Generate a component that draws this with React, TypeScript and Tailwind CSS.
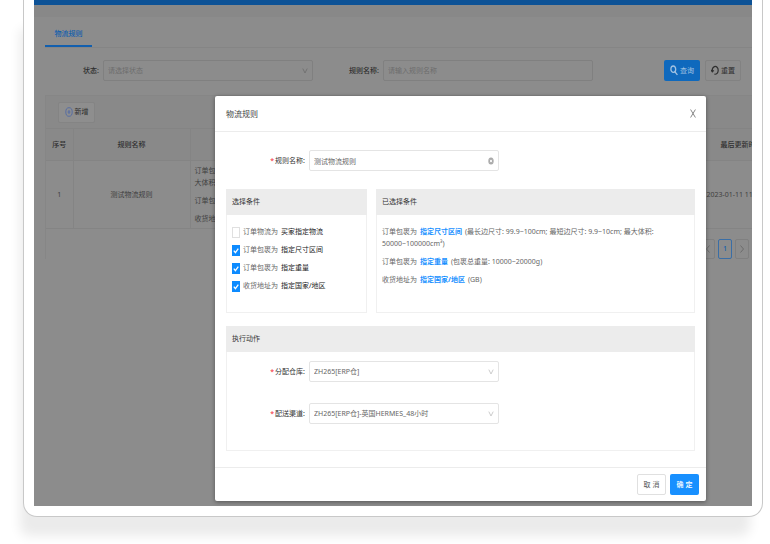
import type { ReactNode } from 'react';

const FONT = "font-['Noto_Sans','Noto_Sans_CJK_SC',sans-serif]";

function Chevron({ className }: { className: string }) {
  return (
    <svg viewBox="0 0 6 6" className={`pointer-events-none col-start-1 row-start-1 mr-[5px] h-[6px] w-[6px] self-center justify-self-end ${className}`} fill="none" stroke="currentColor">
      <path d="M0.8 0.6 L3 5 L5.2 0.6" />
    </svg>
  );
}

function CheckRow({ label, value, checked = false }: { label: string; value: string; checked?: boolean }) {
  return (
    <label className="flex h-[18px] items-center gap-[3px]">
      <span className="grid">
        <input
          type="checkbox"
          defaultChecked={checked}
          className="peer col-start-1 row-start-1 h-[11px] w-2 appearance-none border border-[#e0e0e0] bg-white checked:border-[#0d8bff] checked:bg-[#0d8bff]"
        />
        <svg viewBox="0 0 8 11" className="pointer-events-none invisible col-start-1 row-start-1 h-[11px] w-2 peer-checked:visible" fill="none" stroke="#fff" strokeWidth="1.3">
          <path d="M1.8 5.6 L3.4 7.6 L6.3 3.6" />
        </svg>
      </span>
      <span className="text-[#666]">{label}</span>
      <span className="text-[#222]">{value}</span>
    </label>
  );
}

function Panel({ title, className, children }: { title: string; className: string; children: ReactNode }) {
  return (
    <section className={`border border-[#f0f0f0] ${className}`}>
      <h3 className="-mx-px -mt-px flex h-[26px] items-center bg-[#ececec] px-[6px] text-[#333]">{title}</h3>
      {children}
    </section>
  );
}

function Condition({ label, value, details }: { label: string; value: string; details: string[] }) {
  return (
    <p className="flex flex-wrap">
      <span>{label}</span>
      <b className="mx-[3px] font-bold text-[#1890ff]">{value}</b>
      {details.map((detail) => (
        <span key={detail} className="mr-[2px]">{detail}</span>
      ))}
    </p>
  );
}

function FieldRow({ id, label, children }: { id: string; label: string; children: ReactNode }) {
  return (
    <div className="flex items-center">
      <label htmlFor={id} className="w-[78px] shrink-0 pr-1 text-right text-[#333]">
        <span className="mr-px text-[#f5222d]">*</span>{label}:
      </label>
      <div className="grid w-[190px]">{children}</div>
    </div>
  );
}

const control = 'col-start-1 row-start-1 h-[21px] w-full appearance-none rounded-[2px] border border-[#e4e4e4] bg-white px-1 text-[#666] outline-none';

function Backdrop() {
  return (
    <main className="col-start-1 row-start-1 min-w-0 overflow-hidden bg-[#8c8c8c] text-[#2f2f2f]">
      <div className="h-[5px] bg-[#0d5296]" />
      <div className="h-3 bg-[#888]" />
      <div className="pl-[11px]">
        <nav className="flex border-b border-[#858585]">
          <a href="#rules" className="flex h-[30px] w-[47px] items-center justify-center border-b-2 border-[#125fae] pt-[6px] font-medium text-[#125fae]">
            物流规则
          </a>
        </nav>

        <form className="flex items-center pt-3">
          <label htmlFor="status" className="w-[58px] pr-1 text-right font-medium">状态:</label>
          <div className="grid w-[210px]">
            <select id="status" className="col-start-1 row-start-1 h-[21px] appearance-none rounded-[2px] border border-[#808080] bg-transparent px-1 text-[#6c6c6c]">
              <option>请选择状态</option>
            </select>
            <Chevron className="text-[#727272]" />
          </div>
          <label htmlFor="query" className="ml-9 pr-1 font-medium">规则名称:</label>
          <input id="query" placeholder="请输入规则名称" className="h-[21px] w-[210px] rounded-[2px] border border-[#808080] bg-transparent px-1 placeholder:text-[#6c6c6c]" />
          <div className="ml-auto flex gap-[5px] pr-[11px]">
            <button type="button" className="flex h-[21px] w-[36px] items-center justify-center gap-[2px] rounded-[2px] bg-[#0f69bd] text-[#a3c3e2]">
              <svg viewBox="0 0 8 11" className="h-[11px] w-2" fill="none" stroke="currentColor" strokeWidth="1.3">
                <ellipse cx="3.3" cy="4.2" rx="2.4" ry="3.2" />
                <path d="M5 6.8 L7.4 9.8" />
              </svg>
              查询
            </button>
            <button type="button" className="flex h-[21px] w-[36px] items-center justify-center gap-[2px] rounded-[2px] border border-[#828282]">
              <svg viewBox="0 0 8 11" className="h-[11px] w-2" fill="none" stroke="currentColor" strokeWidth="1.2">
                <path d="M3.4 9.2 C5.6 9.6 7.2 7.8 7.2 5.3 C7.2 2.6 5.4 1 3.4 1.6 C1.8 2.2 1 4 1.2 6.6 M0 5 L1.3 6.8 L2.8 5.4" />
              </svg>
              重置
            </button>
          </div>
        </form>

        <div className="mt-[14px] border-t border-l border-[#868686]">
          <div className="flex h-8 items-center bg-[#898989] pl-3">
            <button type="button" className="flex h-[21px] w-[37px] items-center justify-center gap-[2px] rounded-[2px] border border-[#848484] bg-[#8e8e8e]">
              <svg viewBox="0 0 8 10" className="h-[10px] w-2" fill="none" stroke="#4a66a8" strokeWidth="0.8">
                <ellipse cx="4" cy="5" rx="3.2" ry="4.3" />
                <path d="M4 3 V7 M2.6 5 H5.4" />
              </svg>
              新增
            </button>
          </div>
          <table className="w-full table-fixed border-collapse">
            <thead>
              <tr className="h-8 bg-[#898989]">
                <th className="w-[27px] border border-l-0 border-[#848484] font-medium">序号</th>
                <th className="w-[117px] border border-[#848484] font-medium">规则名称</th>
                <th className="border border-[#848484] font-medium">规则内容</th>
                <th className="w-[49px] border border-r-0 border-[#848484] pl-[17px] text-left font-medium whitespace-nowrap">最后更新时间</th>
              </tr>
            </thead>
            <tbody>
              <tr className="h-[68px] text-[#404040]">
                <td className="border border-l-0 border-[#848484] text-center">1</td>
                <td className="border border-[#848484] text-center">测试物流规则</td>
                <td className="border border-[#848484] pl-1 leading-[12px]">
                  <p>订单包裹为</p>
                  <p>大体积</p>
                  <p className="mt-[6px]">订单包裹为</p>
                  <p className="mt-[6px]">收货地址为</p>
                </td>
                <td className="border border-r-0 border-[#848484] pl-[3px] whitespace-nowrap">2023-01-11 11</td>
              </tr>
            </tbody>
          </table>
          <div className="flex justify-end gap-[3px] pt-[10px] pr-[3px]">
            <button type="button" aria-label="上一页" className="grid h-5 w-[14px] rounded-[2px] border border-[#808080]">
              <svg viewBox="0 0 6 8" className="m-auto h-2 w-[6px]" fill="none" stroke="#6c6c6c"><path d="M4.5 0.5 L1.5 4 L4.5 7.5" /></svg>
            </button>
            <button type="button" className="h-5 w-[14px] rounded-[2px] border border-[#3a6ea6] font-medium text-[#125fae]">1</button>
            <button type="button" aria-label="下一页" className="grid h-5 w-[14px] rounded-[2px] border border-[#808080]">
              <svg viewBox="0 0 6 8" className="m-auto h-2 w-[6px]" fill="none" stroke="#6c6c6c"><path d="M1.5 0.5 L4.5 4 L1.5 7.5" /></svg>
            </button>
          </div>
        </div>
      </div>
    </main>
  );
}

function RuleDialog() {
  return (
    <div role="dialog" aria-label="物流规则" className="z-10 col-start-1 row-start-1 mt-24 mr-[46px] mb-[5px] ml-[181px] rounded-[2px] bg-white shadow-[0_1px_4px_#00000066]">
      <header className="flex h-9 items-center justify-between border-b border-[#ececec] pr-[10px] pl-[11px]">
        <h2 className="text-[8px] text-[#444]">物流规则</h2>
        <button type="button" aria-label="关闭">
          <svg viewBox="0 0 6 9" className="h-[9px] w-[6px]" fill="none" stroke="#888"><path d="M0.6 0.5 L5.4 8.5 M5.4 0.5 L0.6 8.5" /></svg>
        </button>
      </header>

      <div className="px-[11px] pt-[18px] pb-4">
        <div className="pl-[5px]">
          <FieldRow id="rule-name" label="规则名称">
            <input id="rule-name" defaultValue="测试物流规则" className={control} />
            <svg viewBox="0 0 6 8" className="pointer-events-none col-start-1 row-start-1 mr-[5px] h-2 w-[6px] self-center justify-self-end" fill="#aaa">
              <ellipse cx="3" cy="4" rx="2.7" ry="3.6" />
              <path d="M2.2 2.8 L3.8 5.2 M3.8 2.8 L2.2 5.2" stroke="#fff" />
            </svg>
          </FieldRow>
        </div>

        <div className="mt-[18px] flex gap-[9px]">
          <Panel title="选择条件" className="w-[141px] shrink-0">
            <div className="px-[5px] pt-2 pb-[17px]">
              <CheckRow label="订单物流为" value="买家指定物流" />
              <CheckRow label="订单包裹为" value="指定尺寸区间" checked />
              <CheckRow label="订单包裹为" value="指定重量" checked />
              <CheckRow label="收货地址为" value="指定国家/地区" checked />
            </div>
          </Panel>
          <Panel title="已选择条件" className="min-w-0 flex-1">
            <div className="flex flex-col gap-[6px] px-[5px] pt-[11px] leading-[12px] text-[#666]">
              <Condition label="订单包裹为" value="指定尺寸区间" details={['(最长边尺寸: 99.9~100cm;', '最短边尺寸: 9.9~10cm;', '最大体积:', '50000~100000cm³)']} />
              <Condition label="订单包裹为" value="指定重量" details={['(包裹总重量: 10000~20000g)']} />
              <Condition label="收货地址为" value="指定国家/地区" details={['(GB)']} />
            </div>
          </Panel>
        </div>

        <Panel title="执行动作" className="mt-[13px]">
          <div className="flex flex-col gap-[21px] pt-[9px] pb-[26px] pl-1">
            <FieldRow id="warehouse" label="分配仓库">
              <select id="warehouse" className={control}>
                <option>ZH265[ERP仓]</option>
              </select>
              <Chevron className="text-[#ccc]" />
            </FieldRow>
            <FieldRow id="channel" label="配送渠道">
              <select id="channel" className={control}>
                <option>ZH265[ERP仓]-英国HERMES_48小时</option>
              </select>
              <Chevron className="text-[#ccc]" />
            </FieldRow>
          </div>
        </Panel>
      </div>

      <footer className="flex justify-end gap-1 border-t border-[#ececec] px-[7px] py-[6px]">
        <button type="button" className="h-[21px] w-[29px] rounded-[2px] border border-[#e0e0e0] text-[#555]">取 消</button>
        <button type="button" className="h-[21px] w-[29px] rounded-[2px] bg-[#1890ff] font-medium text-white">确 定</button>
      </footer>
    </div>
  );
}

export default function App() {
  return (
    <div className={`min-h-screen overflow-hidden bg-white pr-[7px] pb-7 pl-[23px] text-[7px] leading-[12px] ${FONT}`}>
      <div className="rounded-b-[14px] border border-t-0 border-[#c8c8c8] bg-white px-[10px] pb-[10px] shadow-[-8px_24px_12px_-5px_#ebebeb]">
        <div className="grid">
          <Backdrop />
          <RuleDialog />
        </div>
      </div>
    </div>
  );
}
